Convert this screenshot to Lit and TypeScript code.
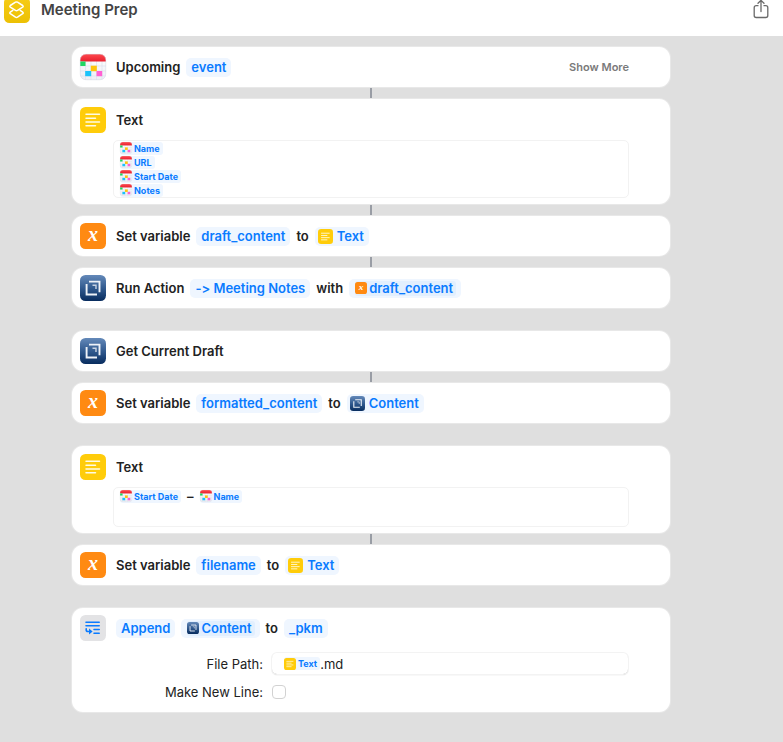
import { LitElement, html, svg, css, TemplateResult } from "lit";
import { customElement, property } from "lit/decorators.js";

const calendar = svg`
  <defs>
    <clipPath id="cal"><rect width="26" height="26" rx="6"/></clipPath>
    <linearGradient id="calRed" x1="0" y1="0" x2="0" y2="1"><stop offset="0" stop-color="#ff4a4f"/><stop offset="1" stop-color="#e8202f"/></linearGradient>
    <linearGradient id="calBody" x1="0" y1="0" x2="0" y2="1"><stop offset="0" stop-color="#ffffff"/><stop offset="1" stop-color="#eceef5"/></linearGradient>
  </defs>
  <g clip-path="url(#cal)">
    <rect width="26" height="26" fill="url(#calBody)"/>
    <path d="M5.500 7v19M11 7v19M16.500 7v19M22 7v19M0 12h26M0 17h26M0 22h26" stroke="#dde1ec" stroke-width=".7"/>
    <rect width="26" height="7.500" fill="url(#calRed)"/>
    <rect y="7.500" width="5.500" height="4.500" fill="#1fd662"/>
    <rect x="10.800" y="11.700" width="6" height="5.500" fill="#ffc40c"/>
    <rect x="5.200" y="17" width="6" height="5.200" fill="#19c3fb"/>
    <rect x="16.500" y="17" width="5.700" height="5.200" fill="#ff5fd2"/>
  </g>
  <rect x=".25" y=".25" width="25.500" height="25.500" rx="5.800" fill="none" stroke="#d5d8e2" stroke-width=".5"/>`;

const note = svg`
  <rect width="26" height="26" rx="5.500" fill="#ffcc0a"/>
  <path d="M6 7.300h13.500M6 11.200h9.500M6 15h13.500M6 18.800h9.500" stroke="#fffbe6" stroke-width="1.500" stroke-linecap="round"/>`;

const variable = svg`
  <rect width="26" height="26" rx="5.500" fill="#ff8a12"/>
  <text x="13" y="18" text-anchor="middle" fill="#fff" font-family="Liberation Serif, serif" font-size="20" font-weight="700" font-style="italic">x</text>`;

const drafts = svg`
  <defs><linearGradient id="dr" x1="0" y1="0" x2="0" y2="1"><stop offset="0" stop-color="#6489b9"/><stop offset=".55" stop-color="#2d568b"/><stop offset="1" stop-color="#082c5e"/></linearGradient></defs>
  <rect width="26" height="26" rx="5.500" fill="url(#dr)"/>
  <path d="M6.600 9V19.500H17" fill="none" stroke="#eef2f8" stroke-width="1.900"/>
  <path d="M9 6.600H19.500V17.200" fill="none" stroke="#eef2f8" stroke-width="1.900"/>
  <path d="M12.500 10.200H16V14" fill="none" stroke="#c8d3e3" stroke-width="1.400"/>`;

const append = svg`
  <rect width="26" height="26" rx="5.500" fill="#e3e3e5"/>
  <g fill="none" stroke="#0a7bff" stroke-width="1.600" stroke-linecap="round" stroke-linejoin="round">
    <path d="M6 7.200h13.200M6 10.800h13.200M14 14.500h5.200M14 18.200h5.200"/>
    <path d="M6.200 13.800v.9q0 1.800 1.800 1.800h2.500"/>
  </g>
  <path d="M9 13.500l3.600 3L9 19.500z" fill="#0a7bff"/>`;

const shortcuts = svg`
  <defs><linearGradient id="sc" x1="0" y1="0" x2="0" y2="1"><stop offset="0" stop-color="#f6cc16"/><stop offset="1" stop-color="#ecc004"/></linearGradient></defs>
  <rect width="26" height="26" rx="5.500" fill="url(#sc)"/>
  <g fill="none" stroke="#fff" stroke-width="1.500" stroke-linejoin="round" stroke-linecap="round">
    <path d="M11.500 5.200q1-.6 2 0l5.200 3.300q1 .8 0 1.600l-5.200 3.300q-1 .6-2 0l-5.200-3.300q-1-.8 0-1.600z"/>
    <path d="M8.800 13.400l-2.500 1.700q-1 .8 0 1.600l5.200 3.500q1 .6 2 0l5.200-3.500q1-.8 0-1.600l-2.500-1.700"/>
  </g>`;

const icons: Record<string, TemplateResult> = { calendar, note, variable, drafts, append, shortcuts };

@customElement("app-icon")
export class AppIcon extends LitElement {
  @property() name = "note";
  static styles = css`
    :host { display: block; flex: none; width: 26px; height: 26px; }
    svg { display: block; width: 100%; height: 100%; overflow: visible; }
  `;
  render() {
    return html`<svg viewBox="0 0 26 26" aria-hidden="true">${icons[this.name]}</svg>`;
  }
}

interface Token { text: string; icon?: string; nested?: boolean; }
type Part = string | Token;
interface Step { icon: string; parts: Part[]; link?: boolean; more?: boolean; lines?: Part[][]; form?: boolean; }

const steps: Step[] = [
  { icon: "calendar", parts: ["Upcoming", { text: "event" }], more: true },
  { icon: "note", parts: ["Text"], link: true, lines: [
    [{ text: "Name", icon: "calendar" }],
    [{ text: "URL", icon: "calendar" }],
    [{ text: "Start Date", icon: "calendar" }],
    [{ text: "Notes", icon: "calendar" }],
  ] },
  { icon: "variable", parts: ["Set variable", { text: "draft_content" }, "to", { text: "Text", icon: "note" }], link: true },
  { icon: "drafts", parts: ["Run Action", { text: "-> Meeting Notes" }, "with", { text: "draft_content", icon: "variable", nested: true }], link: true },
  { icon: "drafts", parts: ["Get Current Draft"] },
  { icon: "variable", parts: ["Set variable", { text: "formatted_content" }, "to", { text: "Content", icon: "drafts" }], link: true },
  { icon: "note", parts: ["Text"], lines: [[{ text: "Start Date", icon: "calendar" }, "–", { text: "Name", icon: "calendar" }]] },
  { icon: "variable", parts: ["Set variable", { text: "filename" }, "to", { text: "Text", icon: "note" }], link: true },
  { icon: "append", parts: [{ text: "Append" }, { text: "Content", icon: "drafts", nested: true }, "to", { text: "_pkm" }], form: true },
];

@customElement("app-root")
export class AppRoot extends LitElement {
  static styles = css`
    :host {
      display: flex; flex-direction: column; min-height: 100vh;
      background: #dfdfdf; color: #222;
      font: 600 13px/20px Inter, "Liberation Sans", sans-serif;
      font-variant-ligatures: none;
    }
    * { box-sizing: border-box; }
    button { font: inherit; font-variant-ligatures: none; color: inherit; border: 0; margin: 0; padding: 0; background: none; white-space: nowrap; }
    header {
      display: flex; align-items: flex-end; gap: 11px; height: 36px; padding: 0 13px 13px 4px;
      background: #fff; overflow: hidden;
    }
    h1 { flex: 1; margin: 0; font-size: 15px; line-height: 26px; font-weight: 600; color: #444; }
    .share svg { display: block; width: 18px; height: 26px; }
    main { padding: 11px 113px 30px 72px; }
    .card {
      min-height: 40px; margin-top: 23px; background: #fff; border-radius: 11px;
      box-shadow: 0 0 0 1px #e8e8e8;
    }
    .card:first-child { margin-top: 0; }
    .connector { width: 2px; height: 10px; margin: 1px auto; background: #999da5; }
    .connector + .card { margin-top: 0; }
    .row { display: flex; align-items: center; height: 40px; padding: 0 41px 0 8px; }
    .row > app-icon { margin-right: 10px; }
    .parts { display: flex; align-items: center; flex: 1; gap: 6px; white-space: nowrap; }
    .token {
      display: flex; align-items: center; gap: 4px; height: 19px; padding: 0 5px;
      border-radius: 5px; background: #eff6ff; color: #0a7bff;
    }
    .token app-icon { width: 15px; height: 15px; }
    .with-icon { padding-left: 3px; }
    .nested { padding-left: 6px; }
    .inner { display: flex; align-items: center; gap: 2px; height: 15px; padding-right: 3px; border-radius: 3px; background: #e2effe; }
    .nested .inner app-icon { width: 12px; height: 12px; }
    .more { font-size: 11px; color: #7a7a7a; }
    .textual { padding-bottom: 6px; }
    .textual .row { height: 41px; }
    .field {
      margin: 0 41px; min-height: 40px; padding: 0 6px;
      border: 1px solid #f2f2f2; border-radius: 5px; outline: none;
    }
    .line { display: flex; align-items: center; gap: 6px; height: 16px; }
    .tall .line { height: 14px; }
    .small { height: 13px; padding: 0 3px 0 0; gap: 2px; border-radius: 3px; font-size: 9px; font-weight: 700; line-height: 13px; }
    .small app-icon { width: 12px; height: 12px; }
    .form { display: grid; grid-template-columns: 191px 1fr; column-gap: 9px; row-gap: 6px; padding: 5px 42px 9px 0; font-weight: 400; }
    .form label { text-align: right; line-height: 22px; }
    .path {
      display: flex; align-items: center; height: 21px; padding-left: 12px; border-radius: 5px;
      box-shadow: 0 0 0 1px #f3f3f3, 0 1px 1px #b9b9b9;
    }
    .path input { flex: 1; min-width: 0; border: 0; padding: 0; outline: 0; background: none; font: inherit; color: inherit; }
    .check {
      appearance: none; width: 14px; height: 14px; margin: 4px 0; background: #fff;
      border: 1px solid #d2d2d2; border-radius: 4px;
    }
  `;

  private part(p: Part, small = false) {
    if (typeof p === "string") return html`<span>${p}</span>`;
    const icon = p.icon ? html`<app-icon name=${p.icon}></app-icon>` : "";
    if (p.nested) return html`<button class="token nested"><span class="inner">${icon}${p.text}</span></button>`;
    return html`<button class="token ${small ? "small" : p.icon ? "with-icon" : ""}">${icon}${p.text}</button>`;
  }

  private form() {
    return html`<div class="form">
      <label for="path">File Path:</label>
      <div class="path">${this.part({ text: "Text", icon: "note" }, true)}<input id="path" value=".md"></div>
      <label for="newline">Make New Line:</label>
      <input class="check" id="newline" type="checkbox">
    </div>`;
  }

  private step(s: Step) {
    return html`
      ${s.link ? html`<div class="connector"></div>` : ""}
      <section class="card ${s.lines ? "textual" : ""}">
        <div class="row">
          <app-icon name=${s.icon}></app-icon>
          <div class="parts">${s.parts.map((p) => this.part(p))}</div>
          ${s.more ? html`<button class="more">Show More</button>` : ""}
        </div>
        ${s.lines ? html`<div class="field ${s.lines.length > 1 ? "tall" : ""}" role="textbox" aria-label="Text" tabindex="0">
          ${s.lines.map((l) => html`<div class="line">${l.map((p) => this.part(p, true))}</div>`)}
        </div>` : ""}
        ${s.form ? this.form() : ""}
      </section>`;
  }

  render() {
    return html`
      <header>
        <app-icon name="shortcuts"></app-icon>
        <h1>Meeting Prep</h1>
        <button class="share" aria-label="Share">
          <svg viewBox="0 0 18 26" fill="none" stroke="#6a6a6a" stroke-width="1.300" stroke-linecap="round" stroke-linejoin="round">
            <path d="M6 8.700H4.200Q2.200 8.700 2.200 10.700V18.500Q2.200 20.500 4.200 20.500H13.800Q15.800 20.500 15.800 18.500V10.700Q15.800 8.700 13.800 8.700H12"/>
            <path d="M9 14.500V3.500M6 6.300L9 3.300L12 6.300"/>
          </svg>
        </button>
      </header>
      <main>${steps.map((s) => this.step(s))}</main>`;
  }
}
